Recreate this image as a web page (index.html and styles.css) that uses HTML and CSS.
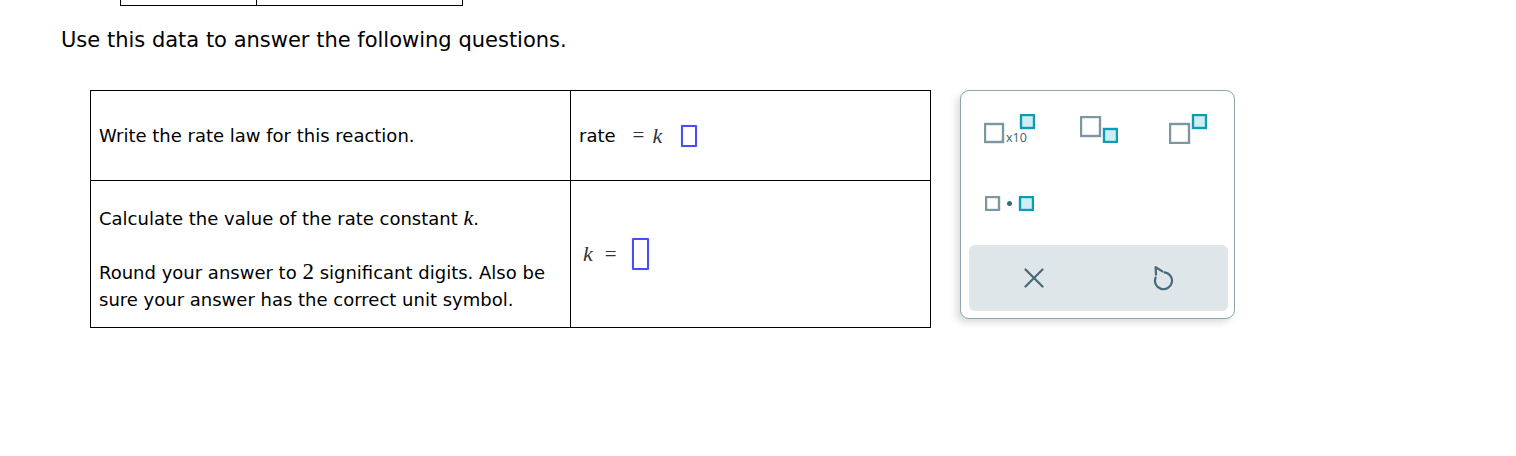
FILE: index.html
```html
<!DOCTYPE html>
<html>
<head>
<meta charset="utf-8">
<link rel="stylesheet" href="styles.css">
</head>
<body>
<div class="prev-table"><div class="prev-cell"></div><div class="prev-cell"></div></div>
<p class="intro">Use this data to answer the following questions.</p>
<div class="main">
  <table class="qtable">
    <colgroup><col class="col-q"><col class="col-a"></colgroup>
    <tr class="row-1">
      <td class="q">Write the rate law for this reaction.</td>
      <td class="a">
        <span class="word">rate</span><span class="op op-wide">=</span><span class="mi">k</span><span class="answer-box box-small"></span>
      </td>
    </tr>
    <tr class="row-2">
      <td class="q q-top">
        <p class="line">Calculate the value of the rate constant <span class="mi mi-text">k</span>.</p>
        <p class="line gap"><span>Round your answer to </span><span class="mn">2</span><span> significant digits. Also be</span><br><span>sure your answer has the correct unit symbol.</span></p>
      </td>
      <td class="a">
        <span class="mi mi-k2">k</span><span class="op">=</span><span class="answer-box box-tall"></span>
      </td>
    </tr>
  </table>

  <div class="panel">
    <div class="keys">
      <button class="key" aria-label="times ten to the power">
        <svg width="51" height="30" viewBox="0 0 51 30">
          <rect class="g" x="1" y="10" width="18" height="18"/>
          <text class="x10" x="22" y="27.5">x10</text>
          <rect class="t" x="37" y="1" width="13" height="13"/>
        </svg>
      </button>
      <button class="key" aria-label="subscript">
        <svg width="38" height="27" viewBox="0 0 38 27">
          <rect class="g" x="1" y="1" width="19" height="19"/>
          <rect class="t" x="24" y="13" width="13" height="13"/>
        </svg>
      </button>
      <button class="key" aria-label="superscript">
        <svg width="38" height="30" viewBox="0 0 38 30">
          <rect class="g" x="1" y="10" width="19" height="19"/>
          <rect class="t" x="24" y="1" width="13" height="13"/>
        </svg>
      </button>
      <button class="key" aria-label="multiply">
        <svg width="49" height="15" viewBox="0 0 49 15">
          <rect class="g" x="1" y="1" width="13" height="13"/>
          <circle class="dot" cx="24.5" cy="7.5" r="2.5"/>
          <rect class="t" x="35" y="1" width="13" height="13"/>
        </svg>
      </button>
    </div>
    <div class="actions">
      <button class="action" aria-label="clear">
        <svg width="20" height="20" viewBox="0 0 20 20">
          <path class="stroke" d="M1.5 1.5 L18.5 18.5 M18.5 1.5 L1.5 18.5"/>
        </svg>
      </button>
      <button class="action" aria-label="undo">
        <svg width="22" height="26" viewBox="0 0 22 26">
          <path class="stroke" d="M4 9.6 L3.6 2.2 L10.4 6.4"/>
          <path class="stroke" d="M12.6 7.3 A8.5 8.5 0 1 1 3.6 12.6"/>
        </svg>
      </button>
    </div>
  </div>
</div>
</body>
</html>
```

FILE: styles.css
```css
* { box-sizing: border-box; }

body {
  margin: 0;
  background: #ffffff;
  color: #000000;
  font-family: "DejaVu Sans", Verdana, sans-serif;
}

.prev-table {
  display: flex;
  width: 343px;
  height: 6px;
  margin-left: 120px;
  border: 1px solid #000;
  border-top: none;
}

.prev-cell:first-child {
  width: 136px;
  border-right: 1px solid #000;
}

.intro {
  margin: 22px 0 0 61px;
  font-size: 21px;
  line-height: 24px;
}

.main {
  display: flex;
  align-items: flex-start;
  gap: 29px;
  margin: 38px 0 0 90px;
}

.qtable {
  border-collapse: collapse;
  table-layout: fixed;
  width: 840px;
  font-size: 18px;
}

.col-q { width: 480px; }
.col-a { width: 360px; }

.qtable td {
  border: 1px solid #000;
  padding: 0 8px;
  vertical-align: middle;
}

.row-1 { height: 90px; }
.row-2 { height: 147px; }

.q { line-height: 27px; }

.q-top {
  vertical-align: top !important;
  padding-top: 24px !important;
}

.line { margin: 0; }
.line.gap { margin-top: 27px; }

.a {
  white-space: nowrap;
}

.a > span { display: inline-block; vertical-align: middle; }

.word { font-size: 18px; }

.op {
  font-family: "Liberation Serif", "DejaVu Serif", serif;
  font-size: 21px;
  color: #333;
  margin: 0 15px 0 12px;
}

.op-wide { margin: 0 8px 0 17px; }

.mi {
  font-family: "Liberation Serif", "DejaVu Serif", serif;
  font-style: italic;
  font-size: 22px;
  color: #333;
}

.mi-k2 { margin-left: 4px; }
.mi-text { color: #000; line-height: 1; }

.mn {
  display: inline-block;
  font-family: "Liberation Serif", "DejaVu Serif", serif;
  font-size: 23px;
  line-height: 20px;
}

.answer-box {
  border: 2px solid #4b4bf7;
  border-radius: 1px;
  box-shadow: 0 0 1px rgba(75, 75, 247, 0.6);
}

.box-small {
  width: 16px;
  height: 22px;
  margin-left: 19px;
}

.box-tall {
  width: 17px;
  height: 32px;
}

.panel {
  width: 275px;
  border: 1px solid #8fa4ad;
  border-radius: 9px;
  background: #fff;
  padding-top: 6px;
  box-shadow: -4px 4px 6px rgba(60, 80, 90, 0.18);
}

.keys {
  display: grid;
  grid-template-columns: repeat(3, 89px);
  grid-template-rows: 64px 84px;
  padding-left: 4px;
}

.key, .action {
  display: flex;
  align-items: center;
  justify-content: center;
  background: none;
  border: none;
  padding: 0;
  margin: 0;
}

.key svg .g {
  fill: #fff;
  stroke: #7d97a1;
  stroke-width: 2.4;
}

.key svg .t {
  fill: #cdeef3;
  stroke: #0e9bb6;
  stroke-width: 2.4;
}

.key svg .dot { fill: #3e6878; }

.x10 {
  font-family: "Open Sans", "DejaVu Sans", sans-serif;
  font-size: 12.5px;
  fill: #3f5d69;
}

.actions {
  display: flex;
  height: 66px;
  margin: 0 6px 7px 8px;
  background: #dfe6e9;
  border-radius: 6px;
}

.action { flex: 1; }

.action .stroke {
  fill: none;
  stroke: #47697a;
  stroke-width: 2.2;
  stroke-linecap: round;
  stroke-linejoin: round;
}
```
